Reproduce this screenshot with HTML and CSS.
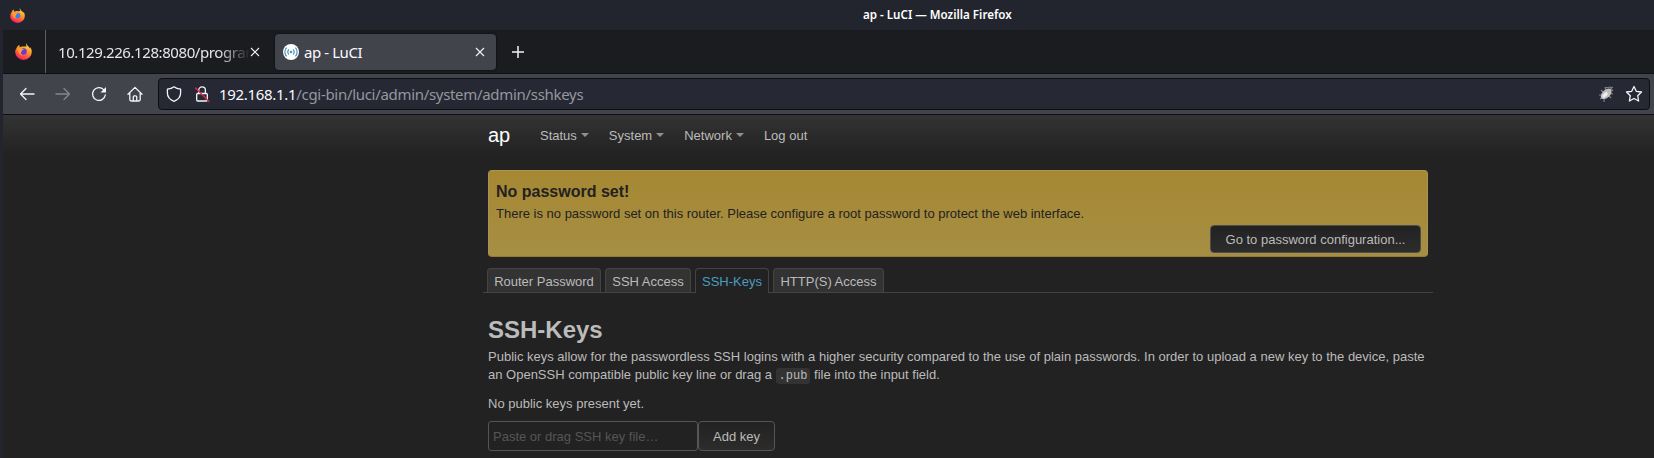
FILE: index.html
```html
<!DOCTYPE html>
<html lang="en">
<head>
<meta charset="utf-8">
<title>ap - LuCI</title>
<link rel="stylesheet" href="styles.css">
</head>
<body>
<svg width="0" height="0" class="defs" aria-hidden="true">
  <defs>
    <linearGradient id="flame" x1="0.8" y1="0" x2="0.3" y2="1">
      <stop offset="0" stop-color="#ffe94a"/><stop offset="0.4" stop-color="#ff9a2a"/><stop offset="0.75" stop-color="#ff4a45"/><stop offset="1" stop-color="#f01a6c"/>
    </linearGradient>
    <symbol id="fox" viewBox="0 0 16 16">
      <path fill="url(#flame)" d="M10.6 0.2c-.5 1-.2 2 .6 2.900l-2.700.3C6.600 3 5.400 3.600 4.700 4 4.200 3.500 4 2.600 4.100 1.700 2.700 2.500 2 3.500 1.600 4.500 .7 5.700.2 7 .2 8.400A7.800 7.500 0 0 0 15.800 8.400c0-2-.6-3.500-1.500-4.700.1.700.1 1.200 0 1.700C13.300 3.200 11 2.600 10.600.2z"/>
      <circle cx="8" cy="8" r="3" fill="var(--globe)"/>
      <path fill="#ffa02c" d="M2.200 5.200C4 4.200 5.300 4.900 6.300 5.400l2 .2c-.3.900-1.500 1-1.800 1.400-.3.700.2 1-.7 1.500-.8 1.300.2 2.700 1.700 3C5 12 3 10 2.200 5.200z"/>
    </symbol>
  </defs>
</svg>
<header class="titlebar">
  <svg class="app-icon" width="15" height="15"><use href="#fox"/></svg>
  <span class="window-title">ap - LuCI — Mozilla Firefox</span>
</header>
<div class="window">
  <div class="tabstrip">
    <div class="pinned"><svg class="pin-icon" width="17" height="17"><use href="#fox"/></svg></div>
    <div class="tab tab-back">
      <span class="tab-label fade">10.129.226.128:8080/program</span>
      <svg class="close" width="10" height="10" viewBox="0 0 10 10"><path d="M1 1l8 8M9 1l-8 8"/></svg>
    </div>
    <div class="tab tab-active">
      <svg width="16" height="16" viewBox="0 0 16 16"><circle cx="8" cy="8" r="8" fill="#fff"/><circle cx="8" cy="8" r="1.300" fill="#4c94b8"/><path d="M5.900 5.500a3.700 3.700 0 0 0 0 5M10.100 5.500a3.700 3.700 0 0 1 0 5M3.600 3.700a6.200 6.200 0 0 0 0 8.600M12.400 3.700a6.200 6.200 0 0 1 0 8.600" fill="none" stroke="#4c94b8" stroke-width="1.200"/></svg>
      <span class="tab-label">ap - LuCI</span>
      <svg class="close" width="10" height="10" viewBox="0 0 10 10"><path d="M1 1l8 8M9 1l-8 8"/></svg>
    </div>
    <svg class="newtab" width="12" height="12" viewBox="0 0 12 12"><path d="M6 0v12M0 6h12"/></svg>
  </div>
  <div class="toolbar">
    <div class="buttons">
      <svg class="ico" width="16" height="16" viewBox="0 0 16 16"><path d="M15 8H1.500M7 2.500L1.500 8 7 13.500"/></svg>
      <svg class="ico dim" width="16" height="16" viewBox="0 0 16 16"><path d="M1 8h13.500M9 2.500L14.500 8 9 13.500"/></svg>
      <svg class="ico" width="16" height="16" viewBox="0 0 16 16"><path d="M12.600 3.600A6.400 6.400 0 1 0 14.300 9"/><path class="solid" d="M15 1v5.500H9.500z"/></svg>
      <svg class="ico" width="16" height="16" viewBox="0 0 16 16"><path d="M1 8.300L8 1.400l7 6.900M2.800 6.800v6.800q0 1.400 1.400 1.400h7.600q1.400 0 1.400-1.400V6.800M6.300 15v-4.200q0-1 1-1h1.400q1 0 1 1V15"/></svg>
    </div>
    <div class="urlbar">
      <svg class="ico shield" width="16" height="16" viewBox="0 0 16 16"><path d="M8 .8Q10.500 2.700 14.600 3.200V7c0 3.800-2.600 6.800-6.600 8.300C4 13.800 1.400 10.800 1.400 7V3.200Q5.500 2.700 8 .8z"/></svg>
      <svg class="ico lock" width="16" height="16" viewBox="0 0 16 16"><path d="M4.700 7V4.300a3.300 3.300 0 0 1 6.700 0V7M3.700 7.500h8.600q1 0 1 1v5.500q0 1-1 1H3.700q-1 0-1-1V8.500q0-1 1-1z"/><path class="slash" d="M1.500 2l13.500 13.500"/></svg>
      <span class="url"><b>192.168.1.1</b>/cgi-bin/luci/admin/system/admin/sshkeys</span>
      <svg class="bug" width="18" height="18" viewBox="0 0 18 18"><path d="M4 5l3 3M8 2l1 4M2 10h4M6 12l-3 2M7 13l0 4M11 10l3 3M12 8l4 1M8 3l5-1 3 4M14 3l2-1" fill="none" stroke="#85858a" stroke-width="1.100"/><ellipse cx="9.200" cy="8.800" rx="6.500" ry="3.900" transform="rotate(-43 9.200 8.800)" fill="#bebebe"/><ellipse cx="8" cy="10" rx="3.200" ry="1.700" transform="rotate(-43 8 10)" fill="#eee"/></svg>
      <svg class="ico star" width="18" height="18" viewBox="0 0 18 18"><path d="M9 1.500l2.300 4.800 5.200.7-3.800 3.700.9 5.300L9 13.500 4.400 16l.9-5.300L1.500 7l5.200-.7z"/></svg>
    </div>
  </div>
  <div class="page">
    <nav class="nav">
      <a class="brand">ap</a>
      <a class="item">Status<i class="caret"></i></a>
      <a class="item">System<i class="caret"></i></a>
      <a class="item">Network<i class="caret"></i></a>
      <a class="item">Log out</a>
    </nav>
    <main class="container">
      <section class="alert">
        <h4>No password set!</h4>
        <p>There is no password set on this router. Please configure a root password to protect the web interface.</p>
        <button class="btn go">Go to password configuration...</button>
      </section>
      <ul class="tabs">
        <li class="t1">Router Password</li>
        <li class="t2">SSH Access</li>
        <li class="t3 active">SSH-Keys</li>
        <li class="t4">HTTP(S) Access</li>
      </ul>
      <h2>SSH-Keys</h2>
      <p class="desc">Public keys allow for the passwordless SSH logins with a higher security compared to the use of plain passwords. In order to upload a new key to the device, paste<br>an OpenSSH compatible public key line or drag a <code>.pub</code> file into the input field.</p>
      <p class="none">No public keys present yet.</p>
      <div class="add">
        <input type="text" placeholder="Paste or drag SSH key file…">
        <button class="btn key">Add key</button>
      </div>
    </main>
  </div>
</div>
</body>
</html>
```
FILE: styles.css
```css
* { box-sizing: border-box; }
body { margin: 0; height: 458px; overflow: hidden; background: #23252e; font-family: "Noto Sans", sans-serif; }
.defs { position: absolute; }
.titlebar { height: 30px; display: grid; grid-template-columns: 853px 1fr; padding-left: 10px; align-items: center; }
.app-icon { --globe: #3f7fe0; }
.window-title { color: #fff; font-size: 11.6px; font-weight: 600; white-space: nowrap; padding-bottom: 2px; }
.window { margin-left: 3px; height: 428px; display: flex; flex-direction: column; }
.tabstrip { height: 43px; background: #1b1c20; display: flex; align-items: center; flex: none; }
.pinned { width: 43px; height: 43px; border-right: 1px solid #5c5d63; display: flex; align-items: center; padding-left: 12px; }
.pin-icon { --globe: #6a3bd2; }
.tab { display: flex; align-items: center; color: #fbfbfe; font-size: 15px; letter-spacing: -0.42px; white-space: nowrap; }
.tab-back { width: 229px; padding-left: 12px; color: #e6e6ea; }
.tab-active { width: 221px; height: 36px; background: #42444c; border-radius: 4px; padding-left: 8px; box-shadow: 0 0 2px #000; }
.tab-active .tab-label { margin-left: 5px; width: 171px; }
.fade { width: 192px; overflow: hidden; -webkit-mask-image: linear-gradient(to left, transparent, #000 32px); mask-image: linear-gradient(to left, transparent, #000 32px); }
.close, .newtab { fill: none; stroke: #f2f2f5; stroke-width: 1.1; flex: none; }
.newtab { margin-left: 16px; stroke-width: 1.5; }
.toolbar { height: 42px; flex: none; background: #42444c; border-top: 1px solid #0f1014; border-bottom: 1px solid #0f1014; display: flex; align-items: center; padding-right: 4px; }
.buttons { width: 155px; display: flex; gap: 20px; padding-left: 16px; }
.ico { fill: none; stroke: #f5f5f8; stroke-width: 1.3; stroke-linejoin: round; stroke-linecap: round; flex: none; }
.dim { stroke: #85868c; }
.solid { fill: #f5f5f8; stroke: none; }
.urlbar { flex: 1; height: 32px; background: #262833; border: 1px solid #0d0e12; border-radius: 4px; display: flex; align-items: center; padding: 0 6px 0 7px; }
.lock { margin-left: 12px; }
.slash { stroke: #e22850; }
.url { flex: 1; margin-left: 9px; font-size: 15px; letter-spacing: -0.31px; color: #96979e; white-space: nowrap; }
.url b { font-weight: 400; color: #fbfbfe; }
.bug { margin-right: 10px; }
.page { flex: 1; background: #222 linear-gradient(#333, #222) 0 0 / 100% 40px no-repeat; font: 13px/18px "Liberation Sans", Arial, sans-serif; color: #bbb; }
.nav { height: 40px; padding-left: 485px; display: flex; align-items: center; }
.brand { font-size: 20px; color: #fff; width: 52px; }
.item { display: flex; align-items: center; margin-right: 20px; padding-top: 2px; }
.caret { border: 4px solid transparent; border-top-color: #909090; border-bottom: 0; margin: 0 0 2px 4px; }
.container { width: 940px; margin-left: 485px; padding-top: 15px; }
.alert { height: 87px; border: 1px solid #a69050; border-color: #ac955a #a99253 #9a7a30; border-radius: 4px; background: linear-gradient(#a68832, #a68e44); color: #222; padding: 12px 7px 0; display: flex; flex-direction: column; }
h4, h2, p { margin: 0; }
h4 { font-size: 16px; line-height: 18px; }
.alert p { margin-top: 4px; white-space: nowrap; }
.btn { font: inherit; color: #bbb; background: linear-gradient(#222, #2c2c2c); border: 1px solid #555; border-radius: 4px; padding: 2px 0 0; white-space: nowrap; }
.go { align-self: flex-end; width: 211px; height: 28px; margin-top: 2px; margin-right: -1px; border-color: #4b4c50; }
.tabs { list-style: none; margin: 11px -5px 0; padding: 0 0 0 4px; height: 25px; display: flex; gap: 4px; border-bottom: 1px solid #444; }
.tabs li { height: 24px; border: 1px solid #444; border-bottom: 0; border-radius: 4px 4px 0 0; background: #333; text-align: center; line-height: 26px; white-space: nowrap; }
.t1 { width: 114px; }
.t2 { width: 86px; }
.t3 { width: 74px; }
.t4 { width: 111px; }
.tabs .active { background: #222; color: #4a9cc0; height: 25px; }
h2 { font-size: 24px; line-height: 36px; margin-top: 19px; }
.desc { white-space: nowrap; }
code { font: 12px/14px "Liberation Mono", monospace; background: #333; border-radius: 3px; padding: 1px 3px; }
.none { margin-top: 11px; }
.add { display: flex; margin-top: 8px; }
input { width: 210px; height: 30px; font: inherit; background: #222; border: 1px solid #555; border-radius: 3px; padding: 1px 4px 0; color: #bbb; }
input::placeholder { color: #555; opacity: 1; }
.key { width: 77px; height: 30px; }
```
